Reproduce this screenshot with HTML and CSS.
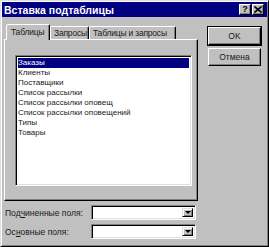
FILE: index.html
```html
<!DOCTYPE html>
<html lang="ru">

<head>
    <meta charset="UTF-8">
    <title>Вставка подтаблицы</title>
    <link rel="stylesheet" href="styles.css">
</head>

<body>
    <div class="dialog">
        <div class="titlebar">
            <span class="title">Вставка подтаблицы</span>
            <div class="caption-btns">
                <span class="cbtn">?</span>
                <span class="cbtn">
                    <svg width="8" height="7" viewBox="0 0 8 7"><path d="M0.5 0.5 L7.5 6.5 M7.5 0.5 L0.5 6.5" stroke="#000" stroke-width="1.6"/></svg>
                </span>
            </div>
        </div>
        <div class="content">
            <div class="left">
                <div class="tabs">
                    <div class="tab active">Таблицы</div>
                    <div class="tab t2">Запросы</div>
                    <div class="tab t3">Таблицы и запросы</div>
                </div>
                <div class="panel">
                    <ul class="listbox">
                        <li class="selected">Заказы</li>
                        <li>Клиенты</li>
                        <li>Поставщики</li>
                        <li>Список рассылки</li>
                        <li>Список рассылки оповещ</li>
                        <li>Список рассылки оповещений</li>
                        <li>Типы</li>
                        <li>Товары</li>
                    </ul>
                </div>
                <div class="field">
                    <label>Под<u>ч</u>иненные поля:</label>
                    <div class="combo"><span class="drop"><i></i></span></div>
                </div>
                <div class="field">
                    <label>Ос<u>н</u>овные поля:</label>
                    <div class="combo"><span class="drop"><i></i></span></div>
                </div>
            </div>
            <div class="buttons">
                <div class="btn default">OK</div>
                <div class="btn">Отмена</div>
            </div>
        </div>
    </div>
</body>

</html>
```

FILE: styles.css
```css
* {
    padding: 0;
    margin: 0;
    box-sizing: border-box;
    list-style: none;
}

body {
    background: #c0c0c0;
    font-family: "Liberation Sans", Arial, sans-serif;
    font-size: 8.5px;
    color: #1a1a1a;
}

.dialog {
    width: 269px;
    height: 247px;
    background: #c0c0c0;
    border: 1px solid;
    border-color: #dfdfdf #000 #000 #dfdfdf;
    box-shadow: inset 1px 1px 0 #fff, inset -1px -1px 0 #808080;
    padding: 1px;
}

.titlebar {
    height: 15px;
    background: #000080;
    display: flex;
    align-items: center;
    justify-content: space-between;
    padding: 0 3px 0 2px;
}

.title {
    color: #fff;
    font-weight: bold;
    font-size: 10.5px;
}

.caption-btns {
    display: flex;
    gap: 1px;
}

.cbtn {
    width: 12px;
    height: 11px;
    background: #c0c0c0;
    border: 1px solid;
    border-color: #fff #000 #000 #fff;
    box-shadow: inset -1px -1px 0 #808080;
    display: flex;
    align-items: center;
    justify-content: center;
    font-weight: bold;
    font-size: 9px;
    line-height: 1;
    color: #000;
}

.content {
    display: flex;
    padding: 7px 0 0 2px;
}

.left {
    width: 194px;
}

.tabs {
    height: 15px;
    display: flex;
    align-items: flex-end;
    padding-left: 2px;
    position: relative;
    z-index: 1;
    font-size: 8.5px;
    letter-spacing: -0.2px;
}

.tab {
    height: 13px;
    border: 1px solid;
    border-bottom: 0;
    border-color: #fff #000 transparent #fff;
    box-shadow: inset -1px 0 0 #808080;
    border-radius: 2px 2px 0 0;
    padding: 1px 0 0 3px;
    line-height: 10px;
    white-space: nowrap;
    overflow: hidden;
}

.tab.active {
    height: 16px;
    width: 44px;
    padding: 2px 0 0 4px;
    margin-bottom: -1px;
    background: #c0c0c0;
}

.t2 {
    width: 39px;
}

.t3 {
    width: 87px;
}

.panel {
    height: 162px;
    border: 1px solid;
    border-color: #fff #000 #000 #fff;
    box-shadow: inset -1px -1px 0 #808080;
    padding: 15px 5px 14px 10px;
}

.listbox {
    height: 100%;
    background: #fff;
    border: 1px solid;
    border-color: #808080 #fff #fff #808080;
    box-shadow: inset 1px 1px 0 #000, inset -1px -1px 0 #dfdfdf;
    padding: 2px;
    font-size: 8px;
}

.listbox li {
    height: 10px;
    line-height: 10px;
    white-space: nowrap;
}

.listbox li.selected {
    background: #000080;
    color: #fff;
}

.field {
    display: flex;
    align-items: center;
    margin-top: 4px;
    padding-left: 1px;
}

.field label {
    width: 86px;
}

.field u {
    text-decoration: underline;
}

.combo {
    width: 105px;
    height: 15px;
    background: #fff;
    border: 1px solid;
    border-color: #808080 #fff #fff #808080;
    box-shadow: inset 1px 1px 0 #000, inset -1px -1px 0 #dfdfdf;
    display: flex;
    justify-content: flex-end;
    padding: 2px;
}

.drop {
    width: 11px;
    height: 100%;
    background: #c0c0c0;
    border: 1px solid;
    border-color: #dfdfdf #000 #000 #dfdfdf;
    box-shadow: inset 1px 1px 0 #fff, inset -1px -1px 0 #808080;
    display: flex;
    align-items: center;
    justify-content: center;
}

.drop i {
    width: 0;
    height: 0;
    border-left: 3px solid transparent;
    border-right: 3px solid transparent;
    border-top: 3px solid #000;
}

.buttons {
    margin-left: 10px;
    padding-top: 3px;
    display: flex;
    flex-direction: column;
    gap: 3px;
}

.btn {
    width: 53px;
    height: 18px;
    border: 1px solid;
    border-color: #fff #000 #000 #fff;
    box-shadow: inset -1px -1px 0 #808080;
    display: flex;
    align-items: center;
    justify-content: center;
}

.btn.default {
    outline: 1px solid #000;
}
```
